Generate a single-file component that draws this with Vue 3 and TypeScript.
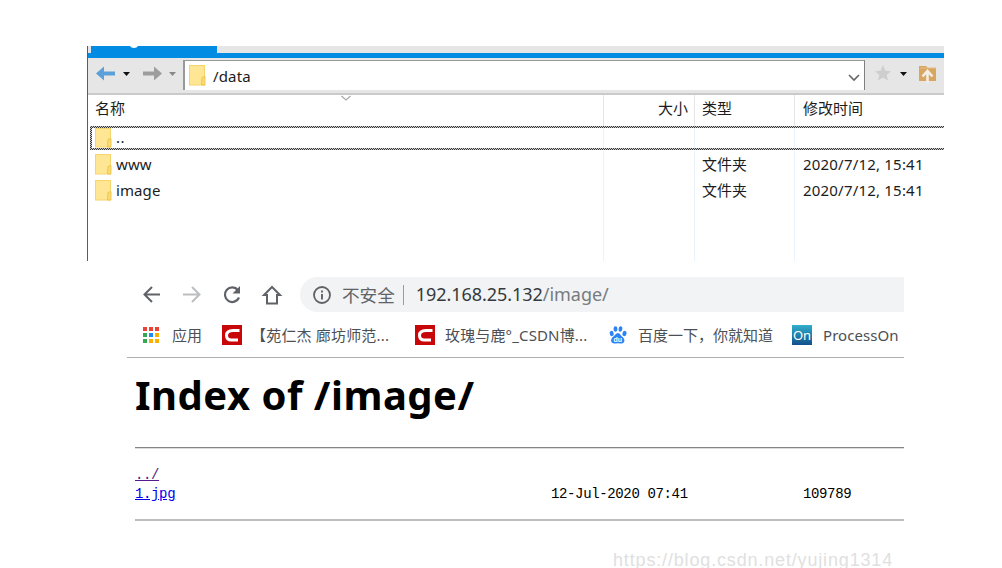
<script setup lang="ts">
interface FileRow {
  name: string
  type: string
  modified: string
}

const parentRow: FileRow = { name: '..', type: '', modified: '' }
const rows: FileRow[] = [
  { name: 'www', type: '文件夹', modified: '2020/7/12, 15:41' },
  { name: 'image', type: '文件夹', modified: '2020/7/12, 15:41' },
]
const appDots: string[] = [
  '#ea4335', '#ea4335', '#ea4335',
  '#34a853', '#1e88f5', '#fbb000',
  '#34a853', '#fbb000', '#fbb000',
]
</script>

<template>
  <div class="page">
    <section class="ftp">
      <div class="tabs">
        <div class="tab">
          <svg width="126" height="7" viewBox="0 0 126 7"><path d="M39 0 Q40 2 43 2 Q46 2 47 0Z" fill="#fff" /></svg>
        </div>
      </div>
      <div class="toolbar">
        <svg class="nav" width="94" height="35" viewBox="0 0 94 35">
          <path d="M8 15.500 16 8.500V13.500H27V17.500H16V22.500Z" fill="#5ba0d8" />
          <path d="M35 14H42L38.500 18Z" fill="#111" />
          <path d="M74 15.500 66 8.500V13.500H55V17.500H66V22.500Z" fill="#9d9d9d" />
          <path d="M81 14H88L84.500 18Z" fill="#888" />
        </svg>
        <div class="address">
          <svg class="folder" width="17" height="21" viewBox="0 0 17 21">
            <rect x=".5" y=".5" width="15" height="19.500" fill="#ffe694" stroke="#f4d66c" />
            <path d="M13 12.500 16 11.500V20H12.500Z" fill="#fbdc72" stroke="#e9be45" stroke-width=".8" />
          </svg>
          <span class="path">/data</span>
          <svg class="chevron" width="14" height="9" viewBox="0 0 14 9"><path d="M2 2 7 7 12 2" fill="none" stroke="#666" stroke-width="1.600" /></svg>
        </div>
        <svg class="tools" width="79" height="35" viewBox="0 0 79 35">
          <path d="M18 7 20.300 12.700 26 13.200 21.700 17 23 22.500 18 19.500 13 22.500 14.300 17 10 13.200 15.700 12.700Z" fill="#cecece" />
          <path d="M35 14H42L38.500 18Z" fill="#111" />
          <path d="M54 8H61L63 10H71V23H54Z" fill="#d9a662" />
          <path d="M55 10H71" stroke="#e6bd83" />
          <path d="M57.500 18.500 62.500 13 67.500 18.500M62.500 13.500V25" fill="none" stroke="#f4eee6" stroke-width="2.600" />
        </svg>
      </div>
      <div class="columns heading">
        <div class="cell name-head">
          <span>名称</span>
          <svg class="sort" width="12" height="7" viewBox="0 0 12 7"><path d="M1.500 1 6 5 10.500 1" fill="none" stroke="#aaa" stroke-width="1.300" /></svg>
        </div>
        <div class="cell size">大小</div>
        <div class="cell">类型</div>
        <div class="cell">修改时间</div>
      </div>
      <div class="focus">
        <div class="columns parent">
          <div class="cell file">
            <svg class="folder" width="17" height="20" viewBox="0 0 17 20">
              <rect x=".5" y=".5" width="15" height="18.500" fill="#ffe694" stroke="#f4d66c" />
              <path d="M13 11.500 16 10.500V19H12.500Z" fill="#fbdc72" stroke="#e9be45" stroke-width=".8" />
            </svg>
            <span>{{ parentRow.name }}</span>
          </div>
          <div class="cell"></div>
          <div class="cell"></div>
          <div class="cell"></div>
        </div>
      </div>
      <div class="listing">
        <div v-for="row in rows" :key="row.name" class="columns row">
          <div class="cell file">
            <svg class="folder" width="17" height="21" viewBox="0 0 17 21">
              <rect x=".5" y=".5" width="15" height="19.500" fill="#ffe694" stroke="#f4d66c" />
              <path d="M13 12.500 16 11.500V20H12.500Z" fill="#fbdc72" stroke="#e9be45" stroke-width=".8" />
            </svg>
            <span>{{ row.name }}</span>
          </div>
          <div class="cell"></div>
          <div class="cell">{{ row.type }}</div>
          <div class="cell date">{{ row.modified }}</div>
        </div>
        <div class="columns filler"><div v-for="n in 4" :key="n" class="cell"></div></div>
      </div>
    </section>

    <section class="browser">
      <div class="navigation">
        <svg class="controls" width="173" height="36" viewBox="0 0 173 36" fill="none" stroke-width="2">
          <path d="M33 17.500H18M25 10 17.500 17.500 25 25" stroke="#5f6368" />
          <path d="M56 17.500H72M65 10 72.500 17.500 65 25" stroke="#bcbec1" />
          <path d="M111 13.200A7.300 7.300 0 1 0 112 20.500" stroke="#5f6368" stroke-width="2.200" />
          <path d="M113 9V16.500H105.500Z" fill="#5f6368" />
          <path d="M145 10 153 18H150V26.500H140V18H137Z" stroke="#5f6368" />
        </svg>
        <div class="omnibox">
          <svg width="20" height="20" viewBox="0 0 20 20"><circle cx="10" cy="10" r="8" fill="none" stroke="#5f6368" stroke-width="1.800" /><path d="M10 9V14.500M10 5.500V7.500" stroke="#5f6368" stroke-width="1.900" /></svg>
          <span class="unsafe">不安全</span>
          <i class="divider"></i>
          <span class="url">192.168.25.132<em>/image/</em></span>
        </div>
      </div>
      <div class="bookmarks">
        <div class="apps"><i v-for="(color, n) in appDots" :key="n" :style="{ background: color }"></i></div>
        <span class="apps-label">应用</span>
        <svg class="csdn" width="20" height="20" viewBox="0 0 20 20"><rect width="20" height="20" fill="#c80808" /><path d="M17.500 5.500H11Q4.500 5.500 4.500 10.500Q4.500 15 9.500 15H16" fill="none" stroke="#fff" stroke-width="3" /></svg>
        <span class="first-label">【苑仁杰 廊坊师范...</span>
        <svg class="csdn" width="20" height="20" viewBox="0 0 20 20"><rect width="20" height="20" fill="#c80808" /><path d="M17.500 5.500H11Q4.500 5.500 4.500 10.500Q4.500 15 9.500 15H16" fill="none" stroke="#fff" stroke-width="3" /></svg>
        <span class="second-label">玫瑰与鹿°_CSDN博...</span>
        <svg class="baidu" width="18" height="20" viewBox="0 0 18 20" fill="#2c83f6">
          <ellipse cx="2.700" cy="8.500" rx="2" ry="2.700" transform="rotate(-15 2.700 8.500)" />
          <ellipse cx="6.500" cy="4" rx="1.900" ry="2.800" />
          <ellipse cx="11.500" cy="4" rx="1.900" ry="2.800" transform="rotate(10 11.500 4)" />
          <ellipse cx="15.500" cy="8.500" rx="2" ry="2.700" transform="rotate(15 15.500 8.500)" />
          <path d="M9 8Q11 8 12 10.500Q15.500 13 15.500 15.500Q15 19 11.500 18.500Q9 18 6.500 18.500Q2.500 19 2 15.500Q2 13 5.500 10.500Q7 8 9 8Z" />
          <text x="4.500" y="17" font-family="Liberation Sans, sans-serif" font-size="7" font-weight="700" fill="#fff">du</text>
        </svg>
        <span class="baidu-label">百度一下，你就知道</span>
        <span class="on">On</span>
        <span class="process-label">ProcessOn</span>
      </div>
      <main class="document">
        <h1>Index of /image/</h1>
        <hr />
        <div class="entries">
          <a class="visited">../</a>
          <div class="entry"><a>1.jpg</a><span>12-Jul-2020 07:41</span><span>109789</span></div>
        </div>
        <hr class="end" />
      </main>
    </section>
    <div class="watermark">https://blog.csdn.net/yujing1314</div>
  </div>
</template>

<style>
body { margin: 0; background: #fff; }
</style>

<style scoped>
* { box-sizing: border-box; }
svg { display: block; flex: none; }
span { white-space: nowrap; }
.page {
  width: 1002px; height: 568px; padding: 46px 0 0 87px; overflow: hidden;
  background: #fff; font-family: "Noto Sans", "Noto Sans CJK SC", sans-serif;
}
.ftp {
  width: 857px; height: 215px; border-left: 1px solid #0873c4; overflow: hidden;
  color: #1c1c1c; font-size: 15px; line-height: 20px;
}
.tabs { height: 12px; padding-left: 3px; background: #e6e6e6; border-bottom: 5px solid #028be2; }
.tab { width: 126px; height: 7px; background: #028be2; }
.toolbar { display: flex; height: 37px; background: #e6e6e6; border-bottom: 2px solid #cacaca; }
.address {
  display: flex; align-items: center; width: 683px; height: 30px; margin: 2px 0 0 1px; padding-left: 4px;
  background: #fff; border: 1px solid #999; border-width: 1px 1px 0 2px; border-right-color: #808080;
}
.path { margin-left: 7px; letter-spacing: .15px; }
.chevron { margin: 4px 3px 0 auto; }
.columns { display: grid; grid-template-columns: 515px 91px 100px 1fr; }
.cell { padding-left: 7px; border-left: 1px solid #eaf3fb; }
.cell:first-child { border-left: 0; }
.cell:last-child { padding-left: 8px; }
.heading { height: 31px; }
.heading .cell { padding-top: 3px; border-color: #e5e5e5; }
.heading .name-head { display: flex; padding-left: 7px; }
.sort { margin: -3px 0 0 215px; }
.heading .size { padding: 3px 6px 0 0; text-align: right; }
.focus {
  height: 24px; margin-left: 2px; padding: 2px 0 2px 2px;
  background: repeating-conic-gradient(#333 0 25%, #ccc 0 50%) 0 0 / 2px 2px;
}
.parent { height: 20px; grid-template-columns: 511px 91px 100px 1fr; background: #fff; }
.file { display: flex; align-items: center; }
.file span { margin-left: 4px; letter-spacing: .1px; }
.parent .file { height: 20px; padding-left: 3px; }
.parent .file span { height: 20px; line-height: 18px; letter-spacing: .5px; }
.listing { padding-top: 1px; }
.row { height: 26px; line-height: 26px; }
.date { letter-spacing: .2px; }
.filler { height: 70px; }
.browser { width: 777px; margin: 16px 0 0 40px; }
.navigation { display: flex; height: 35px; }
.omnibox {
  display: flex; flex: 1; align-items: center; padding-left: 12px; background: #f1f3f4;
  border-radius: 18px 0 0 18px; color: #5f6368; font-size: 18px;
}
.unsafe { margin-left: 10px; font-size: 17.600px; }
.divider { width: 1px; height: 20px; margin: 0 12px 0 8px; background: #999ca0; }
.url { margin-top: -2px; color: #36393d; letter-spacing: -.05px; }
.url em { color: #777b80; font-style: normal; }
.bookmarks {
  display: flex; align-items: center; height: 46px; padding-left: 16px;
  border-bottom: 1px solid #b0b0b0; color: #4c4f53; font-size: 15px; line-height: 22px;
}
.apps { display: grid; grid-template-columns: repeat(3, 4px); gap: 2px; width: 17px; }
.apps i { height: 4px; }
.apps-label { margin: 0 20px 0 12px; }
.first-label { width: 139px; margin: 0 25px 0 9px; letter-spacing: .18px; }
.second-label { width: 142px; margin: 0 22px 0 10px; letter-spacing: .15px; }
.baidu-label { width: 136px; margin: 0 18px 0 11px; }
.on {
  width: 20px; height: 20px; background: linear-gradient(#32aecb, #11508b);
  color: #fff; font-size: 13px; line-height: 20px; text-align: center;
}
.process-label { margin-left: 11px; letter-spacing: .05px; }
.document { padding-left: 8px; color: #000; }
h1 { height: 89px; margin: 0; padding: 9px 0 0; font-size: 40px; line-height: 56px; letter-spacing: .5px; white-space: nowrap; }
hr { height: 2px; margin: 0; border: 0; border-top: 1px solid #868686; border-bottom: 1px solid #ddd; }
.entries { height: 70px; padding-top: 17px; font: 14px/19px "Liberation Mono", monospace; letter-spacing: -.36px; }
.entries a { color: #0000ee; text-decoration: underline; }
.entries .visited { display: block; width: 24px; color: #551a8b; }
.entry { display: grid; grid-template-columns: 416px 252px 1fr; }
.entry a { justify-self: start; }
.end { border-color: #bdbdbd; }
.watermark {
  margin: 28px 0 0 526px; color: #e0e0e0; font: 18px/22px "Liberation Sans", sans-serif; letter-spacing: .84px; white-space: nowrap;
}
</style>
